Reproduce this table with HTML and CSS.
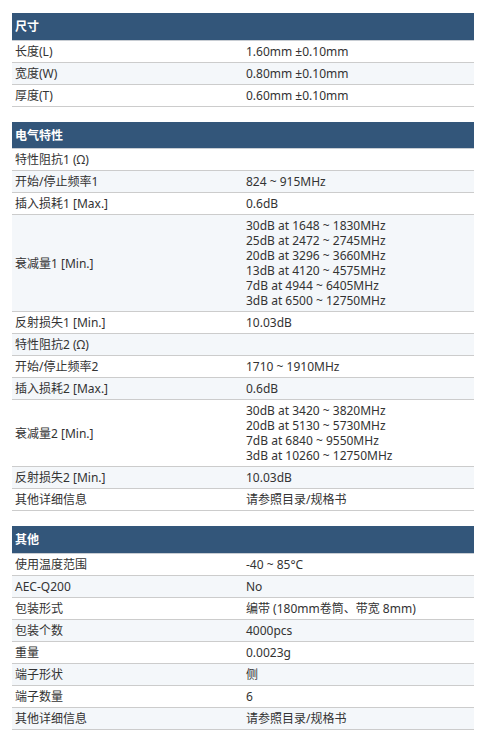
FILE: index.html
```html
<!DOCTYPE html>
<html lang="zh-CN">
<head>
<meta charset="utf-8">
<link rel="stylesheet" href="styles.css">
</head>
<body>
<div class="page">
  <table class="spec">
    <tr class="head"><th colspan="2">尺寸</th></tr>
    <tr><td>长度(L)</td><td>1.60mm ±0.10mm</td></tr>
    <tr><td>宽度(W)</td><td>0.80mm ±0.10mm</td></tr>
    <tr><td>厚度(T)</td><td>0.60mm ±0.10mm</td></tr>
  </table>
  <table class="spec">
    <tr class="head"><th colspan="2">电气特性</th></tr>
    <tr><td>特性阻抗1 (Ω)</td><td></td></tr>
    <tr><td>开始/停止频率1</td><td>824 ~ 915MHz</td></tr>
    <tr><td>插入损耗1 [Max.]</td><td>0.6dB</td></tr>
    <tr><td>衰减量1 [Min.]</td><td>30dB at 1648 ~ 1830MHz<br>25dB at 2472 ~ 2745MHz<br>20dB at 3296 ~ 3660MHz<br>13dB at 4120 ~ 4575MHz<br>7dB at 4944 ~ 6405MHz<br>3dB at 6500 ~ 12750MHz</td></tr>
    <tr><td>反射损失1 [Min.]</td><td>10.03dB</td></tr>
    <tr><td>特性阻抗2 (Ω)</td><td></td></tr>
    <tr><td>开始/停止频率2</td><td>1710 ~ 1910MHz</td></tr>
    <tr><td>插入损耗2 [Max.]</td><td>0.6dB</td></tr>
    <tr><td>衰减量2 [Min.]</td><td>30dB at 3420 ~ 3820MHz<br>20dB at 5130 ~ 5730MHz<br>7dB at 6840 ~ 9550MHz<br>3dB at 10260 ~ 12750MHz</td></tr>
    <tr><td>反射损失2 [Min.]</td><td>10.03dB</td></tr>
    <tr><td>其他详细信息</td><td>请参照目录/规格书</td></tr>
  </table>
  <table class="spec">
    <tr class="head"><th colspan="2">其他</th></tr>
    <tr><td>使用温度范围</td><td>-40 ~ 85°C</td></tr>
    <tr><td>AEC-Q200</td><td>No</td></tr>
    <tr><td>包装形式</td><td>编带 (180mm卷筒、带宽 8mm)</td></tr>
    <tr><td>包装个数</td><td>4000pcs</td></tr>
    <tr><td>重量</td><td>0.0023g</td></tr>
    <tr><td>端子形状</td><td>侧</td></tr>
    <tr><td>端子数量</td><td>6</td></tr>
    <tr><td>其他详细信息</td><td>请参照目录/规格书</td></tr>
  </table>
</div>
</body>
</html>
```
FILE: styles.css
```css
html, body {
  margin: 0;
  padding: 0;
  background: #fff;
}
.page {
  padding: 13px 12px 0 12px;
  display: flex;
  flex-direction: column;
  gap: 15px;
  font-family: "Noto Sans", "Noto Sans CJK SC", sans-serif;
  font-size: 12px;
  color: #333;
}
.spec {
  width: 462px;
  border-collapse: collapse;
  table-layout: fixed;
}
.spec th {
  background: #33567a;
  color: #fff;
  font-weight: bold;
  text-align: left;
  height: 27px;
  padding: 0 3px;
  box-sizing: border-box;
  border-bottom: 1px solid #c8cdd3;
  font-size: 12px;
}
.spec td {
  width: 50%;
  padding: 3px 3px;
  line-height: 15px;
  vertical-align: middle;
  border-bottom: 1px solid #cccccc;
}
.spec tr:nth-child(odd) td {
  background: #f4f7fa;
}
.spec tr:nth-child(even) td {
  background: #fff;
}
```
